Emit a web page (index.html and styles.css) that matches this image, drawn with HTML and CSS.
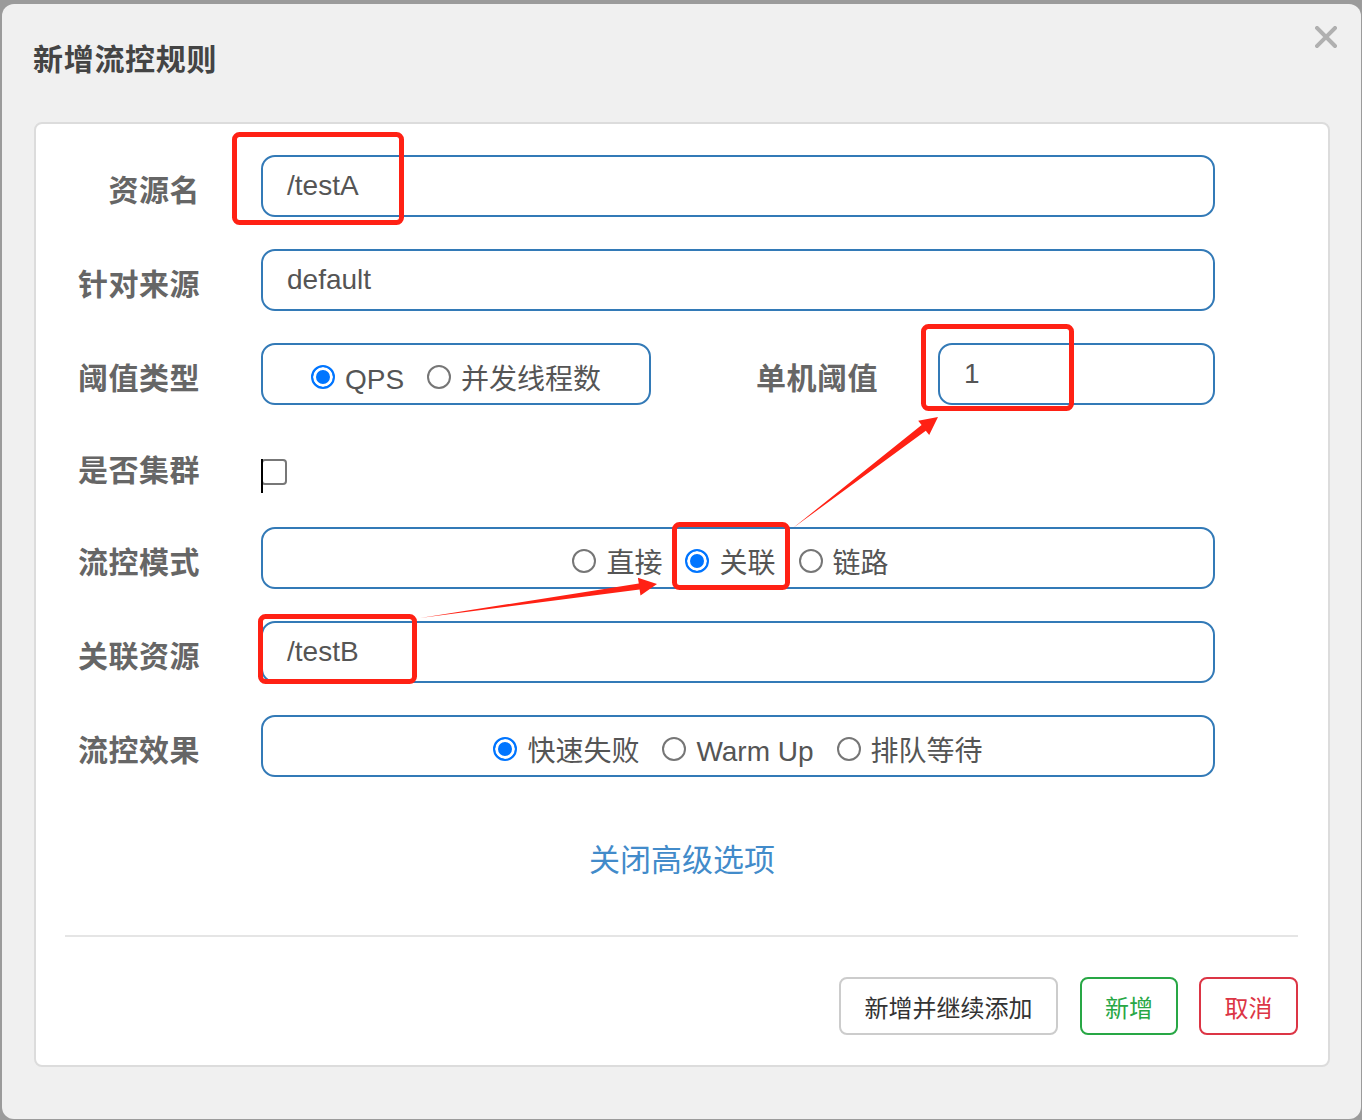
FILE: index.html
```html
<!DOCTYPE html>
<html lang="zh-CN">
<head>
<meta charset="utf-8">
<title>新增流控规则</title>
<link rel="stylesheet" href="styles.css">
</head>
<body>
<div class="dialog">
  <div class="header">
    <h1 class="title">新增流控规则</h1>
    <svg class="close" width="22" height="22" viewBox="0 0 22 22"><path d="M2 2 L20 20 M20 2 L2 20" stroke="#b0b0b0" stroke-width="4" stroke-linecap="square"/></svg>
  </div>
  <div class="panel">
    <div class="form">
      <div class="row">
        <label class="label">资源名</label>
        <div class="input wide">/testA</div>
      </div>
      <div class="row">
        <label class="label">针对来源</label>
        <div class="input wide">default</div>
      </div>
      <div class="row">
        <label class="label">阈值类型</label>
        <div class="group small">
          <span class="opt"><input type="radio" name="g1" checked><span>QPS</span></span>
          <span class="opt"><input type="radio" name="g1"><span>并发线程数</span></span>
        </div>
        <label class="label mid">单机阈值</label>
        <div class="input short">1</div>
      </div>
      <div class="row row-check">
        <label class="label">是否集群</label>
        <div class="checkwrap"><span class="checkbox"></span><span class="caret"></span></div>
      </div>
      <div class="row">
        <label class="label">流控模式</label>
        <div class="group wide mode">
          <span class="opt"><input type="radio" name="g2"><span>直接</span></span>
          <span class="opt"><input type="radio" name="g2" checked><span>关联</span></span>
          <span class="opt"><input type="radio" name="g2"><span>链路</span></span>
        </div>
      </div>
      <div class="row">
        <label class="label">关联资源</label>
        <div class="input wide">/testB</div>
      </div>
      <div class="row">
        <label class="label">流控效果</label>
        <div class="group wide">
          <span class="opt"><input type="radio" name="g3" checked><span>快速失败</span></span>
          <span class="opt"><input type="radio" name="g3"><span>Warm Up</span></span>
          <span class="opt"><input type="radio" name="g3"><span>排队等待</span></span>
        </div>
      </div>
    </div>
    <div class="link-row"><a class="link">关闭高级选项</a></div>
    <div class="sep"></div>
    <div class="footer">
      <button class="btn btn-default">新增并继续添加</button>
      <button class="btn btn-green">新增</button>
      <button class="btn btn-red">取消</button>
    </div>
  </div>
</div>
<svg class="annot" width="1362" height="1120" viewBox="0 0 1362 1120">
  <g fill="none" stroke="#ff2114" stroke-width="5">
    <rect x="234.5" y="134.5" width="167" height="88" rx="5"/>
    <rect x="923.5" y="326.5" width="148" height="82" rx="5"/>
    <rect x="674.5" y="524.5" width="113" height="63" rx="5"/>
    <rect x="260.5" y="616.5" width="154" height="65" rx="5"/>
  </g>
  <g fill="#ff2114">
    <polygon points="420,618 638.8,583.6 637.9,577.7 657,584 640.5,595.5 639.6,589.6"/>
    <polygon points="793,528 921.6,425.1 918.2,420.8 938,417 929.2,435 925.8,430.7"/>
  </g>
</svg>
</body>
</html>
```

FILE: styles.css
```css
html, body {
  margin: 0;
  padding: 0;
}
body {
  background: #9b9b9b;
  width: 1362px;
  height: 1120px;
  overflow: hidden;
  position: relative;
  font-family: "Liberation Sans", "Noto Sans CJK SC", sans-serif;
}
.dialog {
  margin: 4px 0 0 2px;
  width: 1359px;
  height: 1115px;
  background: #f0f0f0;
  border-radius: 12px;
  box-sizing: border-box;
}
.header {
  height: 118px;
  box-sizing: border-box;
  padding: 33px 24px 0 31px;
  display: flex;
  justify-content: space-between;
  align-items: flex-start;
}
.title {
  margin: 0;
  font-family: "Noto Sans CJK SC", sans-serif;
  font-size: 30px;
  letter-spacing: 0.7px;
  line-height: 40px;
  font-weight: 700;
  color: #444;
}
.close {
  margin-top: -11px;
}
.panel {
  margin-left: 32px;
  width: 1296px;
  height: 945px;
  box-sizing: border-box;
  background: #fff;
  border: 2px solid #dcdcdc;
  border-radius: 8px;
}
.form {
  padding-top: 31px;
  display: flex;
  flex-direction: column;
  gap: 32px;
}
.row {
  display: flex;
  align-items: center;
  height: 62px;
}
.row-check {
  height: 58px;
}
.label {
  width: 164px;
  flex: none;
  text-align: right;
  margin-right: 61px;
  font-family: "Noto Sans CJK SC", sans-serif;
  font-size: 30px;
  letter-spacing: 0.5px;
  font-weight: 700;
  color: #666;
  padding-top: 4px;
}
.label.mid {
  width: 227px;
  margin-right: 60px;
}
.input {
  height: 62px;
  box-sizing: border-box;
  border: 2px solid #337ab7;
  border-radius: 14px;
  padding-left: 24px;
  font-size: 28px;
  color: #555;
  display: flex;
  align-items: center;
}
.wide {
  width: 954px;
}
.short {
  width: 277px;
}
.group {
  height: 62px;
  box-sizing: border-box;
  border: 2px solid #337ab7;
  border-radius: 14px;
  display: flex;
  justify-content: center;
  align-items: center;
  gap: 23px;
  padding-top: 12px;
  font-size: 28px;
  color: #555;
}
.group.small {
  width: 390px;
}
.group.mode {
  padding-right: 15px;
}
.opt {
  display: flex;
  align-items: center;
  gap: 10px;
  line-height: 1;
}
.opt input {
  appearance: none;
  -webkit-appearance: none;
  margin: 0;
  width: 24px;
  height: 24px;
  box-sizing: border-box;
  border: 2px solid #767676;
  border-radius: 50%;
  background: #fff;
  position: relative;
  top: -3px;
}
.opt input:checked {
  border-color: #0075ff;
  background: #0075ff;
  box-shadow: inset 0 0 0 3px #fff;
}
.checkwrap {
  position: relative;
  width: 26px;
  height: 34px;
  margin-top: 20px;
}
.checkbox {
  display: block;
  width: 26px;
  height: 26px;
  box-sizing: border-box;
  border: 2px solid #777;
  border-radius: 4px;
  background: #fff;
}
.caret {
  position: absolute;
  left: 0;
  top: 0;
  width: 2px;
  height: 34px;
  background: #000;
}
.link-row {
  margin-top: 61px;
  text-align: center;
  line-height: 40px;
}
.link {
  font-family: "Noto Sans CJK SC", sans-serif;
  font-size: 31px;
  color: #428bca;
}
.sep {
  margin: 49px 30px 0 29px;
  height: 2px;
  background: #e5e5e5;
}
.footer {
  margin: 40px 30px 0 0;
  display: flex;
  justify-content: flex-end;
  gap: 21px;
}
.btn {
  height: 58px;
  box-sizing: border-box;
  background: #fff;
  border-radius: 8px;
  font-family: "Noto Sans CJK SC", sans-serif;
  font-size: 24px;
  padding: 0;
  cursor: pointer;
}
.btn-default {
  width: 219px;
  border: 2px solid #ccc;
  color: #333;
  margin-right: 1px;
}
.btn-green {
  width: 98px;
  border: 2px solid #28a745;
  color: #28a745;
}
.btn-red {
  width: 99px;
  border: 2px solid #dc3545;
  color: #dc3545;
}
.annot {
  position: absolute;
  left: 0;
  top: 0;
  pointer-events: none;
}
```
